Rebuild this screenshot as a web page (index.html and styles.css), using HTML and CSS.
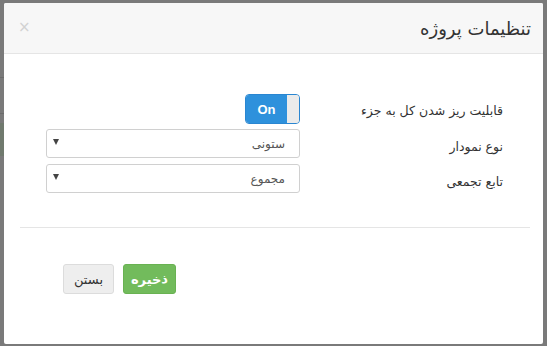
FILE: index.html
```html
<!DOCTYPE html>
<html lang="fa" dir="rtl">
<head>
<meta charset="utf-8">
<link rel="stylesheet" href="styles.css">
</head>
<body>
<div class="backdrop">
  <div class="bg-line l1"></div>
  <div class="bg-line l2"></div>
  <div class="bg-green"></div>
  <div class="modal">
    <div class="modal-header">
      <h4 class="modal-title">تنظیمات پروژه</h4>
      <span class="close">&times;</span>
    </div>
    <div class="modal-body">
      <div class="form-grid">
        <label class="form-label">قابلیت ریز شدن کل به جزء</label>
        <div class="control">
          <div class="switch"><span class="switch-on">On</span><span class="switch-handle"></span></div>
        </div>
        <label class="form-label">نوع نمودار</label>
        <div class="control">
          <div class="select"><span class="select-text">ستونی</span><span class="caret"></span></div>
        </div>
        <label class="form-label">تابع تجمعی</label>
        <div class="control">
          <div class="select"><span class="select-text">مجموع</span><span class="caret"></span></div>
        </div>
      </div>
      <hr class="separator">
      <div class="actions">
        <button class="btn btn-save">ذخیره</button>
        <button class="btn btn-close">بستن</button>
      </div>
    </div>
  </div>
</div>
</body>
</html>
```
FILE: styles.css
```css
html, body {
  margin: 0;
  padding: 0;
  background: #7a7a7a;
}
body {
  font-family: "DejaVu Sans", "Noto Sans", sans-serif;
  width: 547px;
  height: 346px;
  overflow: hidden;
}
.backdrop {
  position: relative;
  width: 547px;
  height: 346px;
  padding: 3px 4px 2px 4px;
  box-sizing: border-box;
}
.bg-line {
  position: absolute;
  left: 0;
  width: 4px;
  height: 1px;
  background: #6c6c6c;
}
.l1 { top: 77px; }
.l2 { top: 113px; }
.bg-green {
  position: absolute;
  left: 0;
  top: 123px;
  width: 4px;
  height: 33px;
  background: #707a6e;
}
.modal {
  width: 539px;
  height: 341px;
  background: #ffffff;
  border-radius: 2px;
  overflow: hidden;
  display: flex;
  flex-direction: column;
}
.modal-header {
  height: 50px;
  background: #f7f7f7;
  border-bottom: 1px solid #e5e5e5;
  display: flex;
  align-items: center;
  justify-content: space-between;
  padding: 0 12px 0 14px;
  flex-shrink: 0;
}
.modal-title {
  margin: 0;
  font-size: 18px;
  font-weight: normal;
  color: #333;
  padding-top: 1px;
}
.close {
  color: #d2d2d2;
  font-size: 15px;
  line-height: 1;
  font-family: "DejaVu Sans", sans-serif;
  padding-bottom: 2px;
}
.modal-body {
  padding: 40px 0 0 0;
}
.form-grid {
  display: grid;
  grid-template-columns: 183px 254px;
  column-gap: 20px;
  row-gap: 5px;
  padding-right: 40px;
  grid-template-rows: 30px 29px 29px;
}
.form-grid > :nth-child(5),
.form-grid > :nth-child(6) {
  margin-top: 1px;
}
.form-label {
  font-size: 12.5px;
  color: #333;
  display: flex;
  align-items: center;
  padding-top: 6px;
}
.form-grid > .form-label:first-child {
  padding-top: 2px;
}
.control {
  display: flex;
}
.switch {
  width: 55px;
  height: 30px;
  box-sizing: border-box;
  border: 1px solid #2a86d1;
  border-radius: 4px;
  display: flex;
  direction: ltr;
  overflow: hidden;
  background: #e9e9e9;
}
.switch-on {
  width: 41px;
  background: #2e91dc;
  color: #fff;
  font-family: "Liberation Sans", Arial, sans-serif;
  font-weight: bold;
  font-size: 13px;
  display: flex;
  align-items: center;
  justify-content: center;
}
.switch-handle {
  flex: 1;
  background: #ebebeb;
}
.select {
  width: 254px;
  height: 29px;
  box-sizing: border-box;
  border: 1px solid #d0d0d0;
  border-radius: 3px;
  display: flex;
  align-items: center;
  justify-content: space-between;
  padding: 0 14px 0 6px;
  background: #fff;
}
.select-text {
  font-size: 12px;
  color: #555;
}
.caret {
  width: 0;
  height: 0;
  border-left: 3.5px solid transparent;
  border-right: 3.5px solid transparent;
  border-top: 6px solid #444;
  margin-bottom: 3px;
}
.separator {
  border: 0;
  border-top: 1px solid #e5e5e5;
  margin: 35px 13px 0 16px;
}
.actions {
  display: flex;
  gap: 9px;
  padding: 36px 367px 0 0;
}
.btn {
  height: 30px;
  border-radius: 3px;
  font-family: "DejaVu Sans", sans-serif;
  font-size: 13px;
  padding: 0;
  cursor: pointer;
}
.btn-save {
  width: 53px;
  background: #72bb5c;
  border: 1px solid #69b252;
  color: #fff;
  font-weight: bold;
}
.btn-close {
  width: 51px;
  background: #eeeeee;
  border: 1px solid #dcdcdc;
  color: #333;
}
```
